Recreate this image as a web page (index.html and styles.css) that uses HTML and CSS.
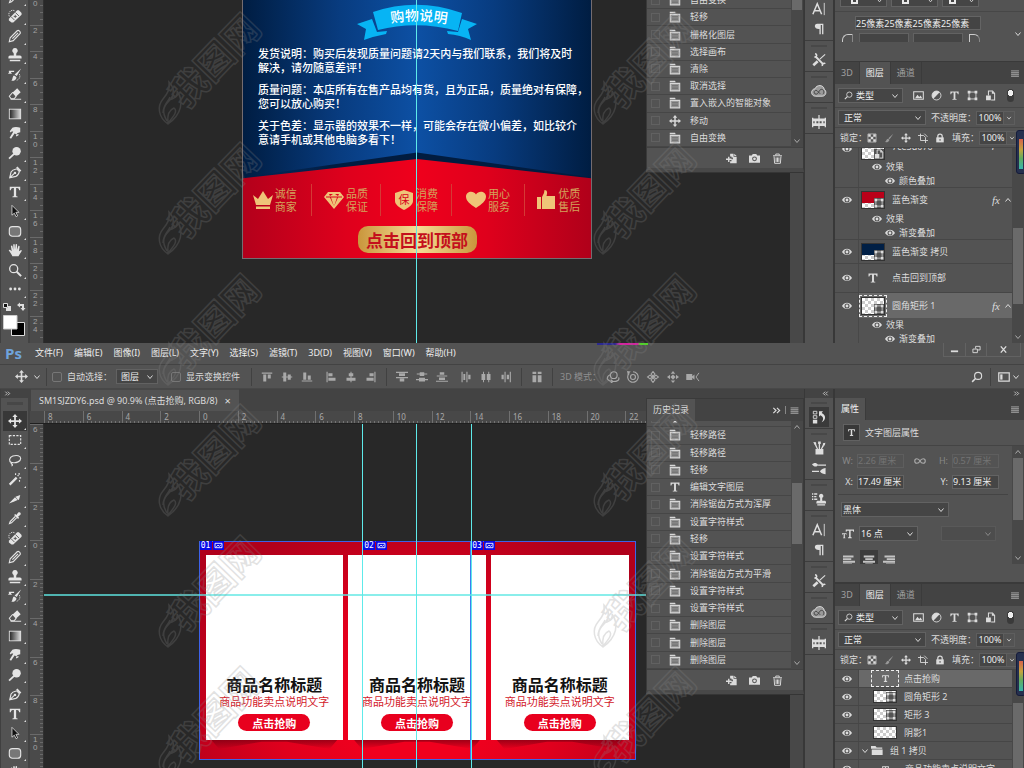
FILE: index.html
```html
<!DOCTYPE html>
<html lang="zh-CN">
<head>
<meta charset="utf-8">
<title>SM1SJZDY6.psd</title>
<link rel="stylesheet" href="styles.css">
</head>
<body>
<svg class="sprite" aria-hidden="true">
  <symbol id="i-move" viewBox="0 0 16 16"><path fill="currentColor" d="M8 0l3 3.500H9V7h3.500V5L16 8l-3.500 3V9H9v3.500h2L8 16l-3-3.500h2V9H3.500v2L0 8l3.500-3v2H7V3.500H5z"/></symbol>
  <symbol id="i-marquee" viewBox="0 0 16 16"><rect x="1.500" y="3" width="13" height="10" fill="none" stroke="currentColor" stroke-width="1.300" stroke-dasharray="2.500 1.500"/></symbol>
  <symbol id="i-lasso" viewBox="0 0 16 16"><path fill="none" stroke="currentColor" stroke-width="1.300" d="M4 11C.8 9.500 1 5 5.500 3.500s9-.5 9 2.800-5 5.400-9 4.700c-2-.4-2.500 1.500-1 1.800 1 .2.700 1.700-.5 2"/></symbol>
  <symbol id="i-wand" viewBox="0 0 16 16"><path fill="currentColor" d="M1 13.500l8-8 1.800 1.800-8 8zM8 1.500h1.300v2H8zM12 1h1.400v2H12zM13 6h2v1.300h-2zM10.500 4l1-1 1 1-1 1zM12.500 9h1.300v2h-1.300z"/></symbol>
  <symbol id="i-slice" viewBox="0 0 16 16"><path fill="currentColor" d="M1 13l7-7 3 3-4.500 2zM8.500 5.500L14 3.500l-1.500 5.500-1.500-.5z" /></symbol>
  <symbol id="i-dropper" viewBox="0 0 16 16"><path fill="none" stroke="currentColor" stroke-width="1.300" d="M8.500 6L2.500 12l-.8 2.300L4 13.500l6-6"/><path fill="currentColor" d="M7 4.500l1.200-1.200L9.500 4.500l2.200-2.700c1.800-1.300 3.800.7 2.500 2.500L11.500 6.500l1.200 1.300L11.500 9z"/></symbol>
  <symbol id="i-heal" viewBox="0 0 16 16"><path fill="currentColor" d="M1 11l9.500-9.500h2l3 3v2L6 15.500H4L1 13z"/><path stroke="#535353" stroke-width="1" d="M3.500 8.800l4 4M8.500 4l4 4M6.500 8.500h3.500M8.300 6.700v3.500"/><path fill="none" stroke="currentColor" stroke-dasharray="1.500 1" d="M1.500 8.500C-.5 4 3.500 0 7.500 2"/></symbol>
  <symbol id="i-pencil" viewBox="0 0 16 16"><path fill="none" stroke="currentColor" stroke-width="1.300" d="M1.500 14.500l1-4.500 8-8c1.500-1.500 4.500 1.500 3.200 3.200L6 13.300zM5 11l6.500-6.500"/></symbol>
  <symbol id="i-stamp" viewBox="0 0 16 16"><path fill="currentColor" d="M8 0a3 3 0 0 1 1.600 5.600L9.300 8.500H14l1.500 1.300V12H.5V9.800L2 8.500h4.700l-.3-2.900A3 3 0 0 1 8 0zM2 13.300h12V15H2z"/></symbol>
  <symbol id="i-hbrush" viewBox="0 0 16 16"><path fill="currentColor" d="M15 .5L10 9 7.500 7.500zM7 8.500l2.500 1.700c.5 3.300-3 5-5.700 4.300C5.500 13 5 9 7 8.500zM1 3h6v1.500H1zM0 6.500L2.500 3 4.500 6.500z"/><path fill="none" stroke="currentColor" stroke-dasharray="1.500 1" d="M13 7c1.500 3 0 6-3 7"/></symbol>
  <symbol id="i-eraser" viewBox="0 0 16 16"><path fill="currentColor" d="M5 6.500L10.500 1.500 14.500 6 9 11zM15 14.500H3v-1.200h12z"/><path fill="none" stroke="currentColor" stroke-width="1.200" d="M5.500 6L1.500 10.500l2 3H7l2.500-3"/></symbol>
  <linearGradient id="toolgrad"><stop offset="0" stop-color="#222"/><stop offset="1" stop-color="#ddd"/></linearGradient>
  <symbol id="i-grad" viewBox="0 0 16 16"><rect x="1.500" y="2.500" width="13" height="11" fill="url(#toolgrad)" stroke="currentColor"/></symbol>
  <symbol id="i-smudge" viewBox="0 0 16 16"><path fill="currentColor" d="M2 6l3-4c2-1 6-1 9 0v5L11 8l-1.500 1.500-2-1L3.500 14.500 1.800 13.500 6 6.500 4.500 6 3 7.500zM9 10l3-1v1.500L9.500 12z"/></symbol>
  <symbol id="i-dodge" viewBox="0 0 16 16"><circle cx="9.800" cy="6" r="4.800" fill="currentColor"/><path stroke="currentColor" stroke-width="2" d="M7 9l-5.800 5.500"/></symbol>
  <symbol id="i-pen" viewBox="0 0 16 16"><path fill="none" stroke="currentColor" stroke-width="1.300" d="M2 14.500L3.500 8C5 5.500 8 5 10 4.500l3 3c-.5 2-1.500 4.500-4 5.500zM2 14.500L8 9"/><circle cx="8" cy="9" r="1.400" fill="currentColor"/><path stroke="currentColor" stroke-width="2" d="M10 2.500l4.500 4.500"/></symbol>
  <symbol id="i-type" viewBox="0 0 16 16"><path fill="currentColor" d="M2 2h12v4h-1.200c-.3-1.700-1-2.500-2.300-2.500H9.300v8.700c0 .6.700.8 1.700.9V14H5v-.9c1-.1 1.700-.3 1.700-.9V3.500H5.500C4.200 3.500 3.500 4.300 3.200 6H2z"/></symbol>
  <symbol id="i-arrow" viewBox="0 0 16 16"><path fill="#111" stroke="currentColor" stroke-width=".9" d="M4.500 1.500l8 8H9l2 4-1.800 1-2-4-2.700 2.300z"/></symbol>
  <symbol id="i-rrect" viewBox="0 0 16 16"><rect x="1.500" y="3" width="13" height="11" rx="3.500" fill="#777" stroke="currentColor" stroke-width="1.300"/></symbol>
  <symbol id="i-hand" viewBox="0 0 16 16"><path fill="currentColor" d="M5 15C3.500 12 2 10 .8 8.500 1.500 7 3 8 4.200 9.500L3.300 3.500c.6-1 1.600-.7 1.800.2L6 8V1.800c.5-.9 1.500-.7 1.700.1L8 7.500l.8-6c.6-.8 1.500-.5 1.600.5L10.200 8l1.600-4.500c.7-.6 1.500-.2 1.500.8L12.500 9.500 15 8c.8.200.8.800.5 1.500L12 15z"/></symbol>
  <symbol id="i-zoom" viewBox="0 0 16 16"><circle cx="6.500" cy="6.500" r="4.600" fill="none" stroke="currentColor" stroke-width="1.500"/><path stroke="currentColor" stroke-width="2.200" d="M10 10l5 5"/></symbol>
  <symbol id="i-dots" viewBox="0 0 16 16"><g fill="currentColor"><circle cx="3" cy="8" r="1.600"/><circle cx="8" cy="8" r="1.600"/><circle cx="13" cy="8" r="1.600"/></g></symbol>
  <symbol id="i-chev" viewBox="0 0 8 8"><path fill="none" stroke="currentColor" d="M1.500 2.500L4 5.500l2.500-3"/></symbol>
  <symbol id="i-up" viewBox="0 0 8 8"><path fill="none" stroke="currentColor" d="M1.500 5.500L4 2.500l2.500 3"/></symbol>
  <symbol id="i-state" viewBox="0 0 16 16"><path fill="currentColor" d="M1 1h7l1 2H1z"/><path fill="#999" stroke="currentColor" stroke-width="1.400" d="M1.700 4.500h12.600v10H1.700z"/><path stroke="#666" d="M4 7.500h8M4 9.500h8M4 11.500h8"/></symbol>
  <symbol id="i-newdoc" viewBox="0 0 16 16"><path fill="currentColor" d="M6 1h5v4.500h4.500V15H6v-3h2V9h2V6.500H8V5H6zM12 1l3.500 3.500H12zM3 5.500h2V8h3v2H5v3H3v-3H0V8h3z"/></symbol>
  <symbol id="i-camera" viewBox="0 0 16 16"><path fill="currentColor" fill-rule="evenodd" d="M0 3.500h4L5.500 1.500h5L12 3.500h4V14H0zM8 5a3.500 3.500 0 1 0 0 7 3.500 3.500 0 0 0 0-7z"/><circle cx="8" cy="8.500" r="2" fill="currentColor"/></symbol>
  <symbol id="i-trash" viewBox="0 0 16 16"><path fill="none" stroke="currentColor" stroke-width="1.400" d="M1.500 4h13M5.500 3.500v-2h5v2M3 5l.8 10h8.400L13 5M6 6.500v6.500M8 6.500v6.500M10 6.500v6.500"/></symbol>
  <symbol id="i-char" viewBox="0 0 16 16"><path fill="none" stroke="currentColor" stroke-width="1.700" d="M1 14L6 2l5 12M3 10h6"/><path stroke="currentColor" d="M14 1v14"/></symbol>
  <symbol id="i-para" viewBox="0 0 16 16"><path fill="currentColor" d="M6 2h7v12h-1.500V3.500H10V14H8.500V8C2 8.500 2 2 6 2z"/></symbol>
  <symbol id="i-tools" viewBox="0 0 16 16"><path fill="none" stroke="currentColor" stroke-width="2.200" d="M4 4l9 9"/><path fill="none" stroke="currentColor" stroke-width="1.800" d="M3.500.8c2.500.5 2.500 4-.8 3.800M12 14.800c-1-2.500 2-4 3-2.300"/><path stroke="currentColor" stroke-width="1.300" d="M15 1.500L9 7"/><path stroke="currentColor" stroke-width="3" d="M6.500 9.500L1.500 14"/></symbol>
  <symbol id="i-cc" viewBox="0 0 20 16"><path fill="#9a9a9a" stroke="currentColor" stroke-width="1.200" d="M6 14.500C-1 14.500-.5 5.500 5 5.300 7-.5 16 0 16.500 6c3.500 2 2.500 8.500-2.500 8.500z"/><path fill="none" stroke="#444" stroke-width="1.200" d="M11.500 11.500L7.500 7.500c-4-1.500-5 4.500-1 4.500 3 0 3-5 6-6s5 4 2.200 6"/></symbol>
  <symbol id="i-align" viewBox="0 0 16 16"><path fill="currentColor" d="M0 3h1.500v11H0zM14.500 3H16v11h-1.500zM1 4h14v3H1zM1 9.500h14v3H1zM7.300 0h1.400v16H7.300zM3 6.500h2v4H3zM11 6.500h2v4h-2z"/></symbol>
  <symbol id="i-history" viewBox="0 0 16 16"><path fill="none" stroke="currentColor" d="M1.500 1.500h4v3h-4zM1.500 6.500h4v3h-4z"/><path fill="currentColor" d="M1 11h5v4.500H1zM8 1.500h4.500L11 3.500c6 3 4.500 8.500 0 10.500 2.500-3 2.500-6-1.300-8L8 7.500z"/></symbol>
  <symbol id="i-brushes" viewBox="0 0 16 16"><path fill="currentColor" d="M4 9h9v6.500H4zM7.700 3h1.500v6H7.700zM3 4l1.500-.7L7 9H5.500zM12.500 4L14 5l-2.500 4H10zM7 .5h3v3H7zM1.500 1l3 .5.500 2.500-2 .5zM12.500 2.500l2.800-.5-.8 3-2 .5z"/></symbol>
  <symbol id="i-presets" viewBox="0 0 16 16"><path fill="currentColor" d="M7 4h9v1.500H7zM0 11h8v1.500H0zM0 4c2-2 5-2.500 7 .7C5 7.500 2 6.500 0 4zM9 11.700c2-3 5-3.500 6.500-3.700v7c-2 0-5-.5-6.500-3.300z"/></symbol>
  <symbol id="i-clone" viewBox="0 0 16 16"><path fill="currentColor" d="M0 1.500h1.500V3H0zM2.500 1.500H6V3H2.500zM0 4.500h1.500V6H0zM2.500 4.500H5V6H2.500zM0 7.500h1.500V9H0zM2.500 7.500H6V9H2.500zM10.500 2a2.500 2.500 0 0 1 1.200 4.700V10H15l1 1v2H5v-2l1-1h3.300V6.700A2.500 2.500 0 0 1 10.500 2zM6 14h9v1.500H6z"/></symbol>
  <symbol id="i-eye" viewBox="0 0 16 12"><path fill="currentColor" fill-rule="evenodd" d="M0 6C4-.8 12-.8 16 6 12 12.500 4 12.500 0 6zm8-4a4 4 0 1 0 0 8 4 4 0 0 0 0-8z"/><circle cx="8" cy="6" r="2.300" fill="currentColor"/></symbol>
  <symbol id="i-image" viewBox="0 0 16 16"><path fill="none" stroke="currentColor" stroke-width="1.500" d="M1 2.500h14v11H1z"/><path fill="currentColor" d="M3 12l3.500-5L9 10l2-2 2.500 4z"/></symbol>
  <symbol id="i-adjust" viewBox="0 0 16 16"><circle cx="8" cy="8" r="6.500" fill="none" stroke="currentColor" stroke-width="1.300"/><path fill="currentColor" d="M12.600 3.400A6.500 6.500 0 0 0 3.400 12.600z"/></symbol>
  <symbol id="i-shape" viewBox="0 0 16 16"><path fill="none" stroke="currentColor" stroke-width="1.200" d="M3 3h10v10H3z"/><path fill="currentColor" d="M1 1h4v4H1zM11 1h4v4h-4zM1 11h4v4H1zM11 11h4v4h-4z"/></symbol>
  <symbol id="i-smart" viewBox="0 0 16 16"><path fill="none" stroke="currentColor" stroke-width="1.500" d="M5 8V1.500h6L14 5v9.500h-5"/><path fill="currentColor" d="M1.500 8h7v7h-7zM10 1v4.500h4.500z"/></symbol>
  <symbol id="i-checker" viewBox="0 0 16 16"><path fill="none" stroke="currentColor" d="M1.500 1.500h13v13h-13z"/><path fill="currentColor" d="M2 2h4v4H2zM10 2h4v4h-4zM6 6h4v4H6zM2 10h4v4H2zM10 10h4v4h-4z"/></symbol>
  <symbol id="i-brush" viewBox="0 0 16 16"><path fill="currentColor" d="M15 1L9 10 7 8.500zM6.500 9l2 1.600C9 13.500 5 15.500 1 14.500 4 13.500 3.500 9.500 6.500 9z"/></symbol>
  <symbol id="i-crop" viewBox="0 0 16 16"><path fill="none" stroke="currentColor" stroke-width="1.400" d="M4 1v11h12M0 4h9l3 3v9M10 1l5 5"/></symbol>
  <symbol id="i-lock" viewBox="0 0 16 16"><path fill="currentColor" d="M2 7h12v8H2z"/><path fill="none" stroke="currentColor" stroke-width="2" d="M4.500 8V5c0-4.500 7-4.500 7 0v3"/><path fill="#444" d="M7.300 9.500h1.500v3H7.300z"/></symbol>
  <symbol id="i-menu" viewBox="0 0 16 16"><path fill="#8f8f8f" d="M1 2h14v2.500H1zM1 5.500h14V8H1zM1 9h14v2.500H1zM1 12.500h14V14H1z"/></symbol>
  <symbol id="i-folder" viewBox="0 0 16 12"><path fill="currentColor" d="M0 0h6l1.500 2H15v1.500H0zM1 4.500h14.500V12H1z"/></symbol>
  <symbol id="i-link" viewBox="0 0 16 10"><path fill="none" stroke="currentColor" stroke-width="1.500" d="M8 5c-2-4-7-4-7 0s5 4 7 0 7-4 7 0-5 4-7 0z"/></symbol>
  <symbol id="i-left" viewBox="0 0 16 16"><path fill="currentColor" d="M2 1h1.500v14H2zM4.500 3H10v4H4.500zM4.500 9H14v4H4.500z"/></symbol>
  <symbol id="i-centre" viewBox="0 0 16 16"><path fill="currentColor" d="M7.300 1h1.400v14H7.300zM5 3h6v4H5zM2 9h12v4H2z"/></symbol>
  <symbol id="i-right" viewBox="0 0 16 16"><path fill="currentColor" d="M12.500 1H14v14h-1.500zM6 3h5.500v4H6zM2 9h9.500v4H2z"/></symbol>
  <symbol id="i-top" viewBox="0 0 16 16"><path fill="currentColor" d="M1 2h14v1.500H1zM3 4.500h4V14H3zM9 4.500h4V10H9z"/></symbol>
  <symbol id="i-middle" viewBox="0 0 16 16"><path fill="currentColor" d="M1 7.300h14v1.400H1zM3 2h4v12H3zM9 4.500h4v7H9z"/></symbol>
  <symbol id="i-bottom" viewBox="0 0 16 16"><path fill="currentColor" d="M1 12.500h14V14H1zM3 2h4v9.500H3zM9 6h4v5.500H9z"/></symbol>
  <symbol id="i-disth" viewBox="0 0 16 16"><path fill="currentColor" d="M0 1h16v1.500H0zM4 3h8v3.500H4zM0 8h16v1.500H0zM5 10h6v4H5z"/></symbol>
  <symbol id="i-distc" viewBox="0 0 16 16"><path fill="currentColor" d="M5 1.500h6v5H5zM4 9h8v5H4zM1 3.300h14v1.400H1zM0 10.800h16v1.400H0z"/></symbol>
  <symbol id="i-distb" viewBox="0 0 16 16"><path fill="currentColor" d="M5 1.500h6v3.500H5zM1 6h14v1.400H1zM4 8.500h8V12H4zM0 13h16v1.400H0z"/></symbol>
  <symbol id="i-distl" viewBox="0 0 16 16"><path fill="currentColor" d="M2 1h1.500v14H2zM4.500 4H7v8H4.500zM8.500 1H10v14H8.500zM11 5h3v6h-3z"/></symbol>
  <symbol id="i-distm" viewBox="0 0 16 16"><path fill="currentColor" d="M2 4h5v8H2zM9 4h5v8H9zM4 1h1.300v14H4zM11 1h1.300v14H11z"/></symbol>
  <symbol id="i-distr" viewBox="0 0 16 16"><path fill="currentColor" d="M2 5h3v6H2zM6 1h1.500v14H6zM9 5h3v6H9zM13 1h1.500v14H13z"/></symbol>
  <symbol id="i-auto" viewBox="0 0 16 16"><path fill="currentColor" d="M2 1h5v3H2zM9 1h5v3H9zM2 5.500h5V15H2zM9 5.500h5V15H9z"/></symbol>
  <symbol id="i-orbit" viewBox="0 0 18 16"><g fill="none" stroke="currentColor" stroke-width="1.500"><circle cx="10" cy="5.500" r="4.500"/><path d="M5 5C-1 8 1 13 7 14M9 14c6 0 9-2 7.500-5.500M6 11.500l3 2.500-3 2"/></g></symbol>
  <symbol id="i-roll" viewBox="0 0 16 16"><g fill="none" stroke="currentColor" stroke-width="1.500"><circle cx="8" cy="8" r="3.300"/><path d="M3 3a7 7 0 1 0 5-2"/></g><path fill="currentColor" d="M0 0l5 .5-4 4z"/></symbol>
  <symbol id="i-pan" viewBox="0 0 16 16"><g fill="none" stroke="currentColor" stroke-width="1.500"><path d="M8 .8L10.500 4 8 7 5.500 4zM8 9l2.500 3L8 15.200 5.500 12zM.8 8L4 5.500 7 8l-3 2.500zM9 8l3-2.500L15.200 8 12 10.500z"/></g></symbol>
  <symbol id="i-slide" viewBox="0 0 16 16"><path fill="currentColor" d="M8 4.500L11.500 8 8 11.500 4.500 8zM8 0l3 3.500H5zM8 16l3-3.500H5zM0 8l4-3v6zM16 8l-4-3v6z"/></symbol>
  <symbol id="i-video" viewBox="0 0 18 16"><path fill="currentColor" d="M0 4h8v3l3-2.500v7L8 9v3H0z"/><path fill="none" stroke="currentColor" stroke-width="1.300" d="M17 2.500L13 8l4 5.500"/></symbol>
  <symbol id="i-search" viewBox="0 0 16 16"><circle cx="9.500" cy="6.500" r="4.700" fill="none" stroke="currentColor" stroke-width="1.500"/><path stroke="currentColor" stroke-width="2" d="M6 10l-4.500 4.500"/></symbol>
  <symbol id="i-space" viewBox="0 0 16 16"><path fill="none" stroke="currentColor" stroke-width="1.600" d="M1 2.500h14v11H1z"/><path fill="currentColor" d="M3 4.500h3v7H3z"/></symbol>
  <symbol id="i-dblr" viewBox="0 0 10 8"><path fill="none" stroke="currentColor" stroke-width="1.300" d="M1.500 1L4.500 4l-3 3M5.500 1L8.500 4l-3 3"/></symbol>
  <symbol id="i-dbll" viewBox="0 0 10 8"><path fill="none" stroke="currentColor" stroke-width="1.300" d="M4.500 1L1.500 4l3 3M8.500 1L5.500 4l3 3"/></symbol>
  <symbol id="i-tl" viewBox="0 0 16 16"><path fill="currentColor" d="M0 2h14v2.500H0zM0 5.500h11V8H0zM0 9h16v2.500H0zM0 12.500h12V15H0z"/></symbol>
  <symbol id="i-tc" viewBox="0 0 16 16"><path fill="currentColor" d="M1 2h14v2.500H1zM3 5.500h10V8H3zM0 9h16v2.500H0zM3 12.500h10V15H3z"/></symbol>
  <symbol id="i-tr" viewBox="0 0 16 16"><path fill="currentColor" d="M2 2h14v2.500H2zM5 5.500h11V8H5zM0 9h16v2.500H0zM4 12.500h12V15H4z"/></symbol>
  <symbol id="i-size" viewBox="0 0 16 16"><path fill="currentColor" d="M5 2h11v3h-1l-.5-1.500h-3V12l1.500.5v1H8v-1l1.500-.5V3.500h-3L6 5H5zM0 7h6v2h-.7L5 8H3.800v4.500l.7.500v.5h-3V13l.7-.5V8H1L.7 9H0z"/></symbol>
  <symbol id="i-slicebadge" viewBox="0 0 10 8"><path fill="none" stroke="#fff" d="M1 1.500h8v5H1zM2.500 5.500l2-2 1.500 1.500 2-2"/></symbol>
  <symbol id="wm" viewBox="0 0 110 115" overflow="visible"><g fill="none" stroke="currentColor" stroke-width="1.500"><path d="M8 111C-2 104-3 93 3 86 8 80 10 76 9 69c5 5 6 10 3 17 5-2 6-5 5-8 7 10 5 23-9 33zM7 108C1 98 4 93 9 88c4-4 5-7 4-12M8 110c-1-8 1-13 6-15 4 3 0 8-6 15M3 100c0-8 5-11 7-16"/><text x="26" y="97" font-size="37" font-weight="700" transform="rotate(-46 26 97)">我图网</text></g></symbol>
</svg>

<main class="screen">
<section class="window window-top">
  <aside class="toolbox">
    <div class="tools tools-top">
      <button aria-label="吸管"><svg><use href="#i-dropper"/></svg></button>
      <button aria-label="修复"><svg><use href="#i-heal"/></svg></button>
      <button aria-label="铅笔"><svg><use href="#i-pencil"/></svg></button>
      <button aria-label="图章"><svg><use href="#i-stamp"/></svg></button>
      <button aria-label="历史画笔"><svg><use href="#i-hbrush"/></svg></button>
      <button aria-label="橡皮擦"><svg><use href="#i-eraser"/></svg></button>
      <button aria-label="渐变"><svg><use href="#i-grad"/></svg></button>
      <button aria-label="涂抹"><svg><use href="#i-smudge"/></svg></button>
      <button aria-label="减淡"><svg><use href="#i-dodge"/></svg></button>
      <button aria-label="钢笔"><svg><use href="#i-pen"/></svg></button>
      <button aria-label="文字"><svg><use href="#i-type"/></svg></button>
      <button aria-label="路径选择"><svg><use href="#i-arrow"/></svg></button>
      <button aria-label="圆角矩形"><svg><use href="#i-rrect"/></svg></button>
      <button aria-label="抓手"><svg><use href="#i-hand"/></svg></button>
      <button aria-label="缩放"><svg><use href="#i-zoom"/></svg></button>
      <button aria-label="更多"><svg><use href="#i-dots"/></svg></button>
    </div>
    <svg class="swatches" viewBox="0 0 28 36"><path fill="#111" stroke="#ddd" d="M3.500 3.500h4v4h-4z"/><path fill="#ddd" d="M8 6h3v5H6V8h2zM17 5l3-2.500V4h4v4h1.500L23 11l-2.500-3H22V6h-2v1.500z"/><path fill="#000" stroke="#ddd" d="M11.500 22.500h13v13h-13z"/><path fill="#fff" stroke="#ccc" d="M3.500 15.500h13.500v13.500H3.500z"/></svg>
  </aside>
  <div class="vruler vruler-top"><span>0</span><span>2</span><span>4</span><span>6</span><span>8</span><span>1<br>0</span><span>1<br>2</span><span>1<br>4</span><span>1<br>6</span><span>1<br>8</span><span>2<br>0</span><span>2<br>2</span><span>2<br>4</span></div>
  <div class="document">
    <div class="canvas">
      <article class="notice">
        <svg class="notice-back" viewBox="0 0 350 259" preserveAspectRatio="none" aria-hidden="true">
          <defs><linearGradient id="redfill"><stop offset="0" stop-color="#b3001b"/><stop offset=".3" stop-color="#df001c"/><stop offset=".5" stop-color="#ef001c"/><stop offset=".7" stop-color="#df001c"/><stop offset="1" stop-color="#b0001a"/></linearGradient>
          <linearGradient id="navy"><stop offset="0" stop-color="#01204a" stop-opacity="0"/><stop offset=".25" stop-color="#011c40"/><stop offset=".8" stop-color="#011c40"/><stop offset="1" stop-color="#011c40"/></linearGradient></defs>
          <path fill="url(#navy)" d="M0 178L175 153l175 25v4H0z"/><path fill="url(#redfill)" d="M0 179L175 159.500 350 179v80H0z"/>
        </svg>
        <svg class="ribbon" viewBox="0 0 120 40"><g fill="#07b4f4"><path d="M16 9Q60-6 105 10l-4 18Q60 17 21 27z"/><path d="M15 16l-15 5 9 5-2 11q11-4 22-6l1-3-10 1z"/><path d="M105 16l15 5-9 5 3 11q-11-5-23-6l-1-3 11 1z"/></g><path id="arc" fill="none" d="M20 23Q60 12 104 24"/><text font-size="14" font-weight="500" fill="#fff"><textPath href="#arc" startOffset="50%" text-anchor="middle">购物说明</textPath></text></svg>
        <div class="notice-copy">
          <p>发货说明：购买后发现质量问题请2天内与我们联系，我们将及时<br>解决，请勿随意差评！</p>
          <p>质量问题：本店所有在售产品均有货，且为正品，质量绝对有保障，<br>您可以放心购买！</p>
          <p>关于色差：显示器的效果不一样，可能会存在微小偏差，如比较介<br>意请手机或其他电脑多看下！</p>
        </div>
        <div class="features">
          <div><svg viewBox="0 0 20 20"><path d="M0 5l5 4 5-8 5 8 5-4-3 10H3zM3 16.500h14V19H3z"/></svg><span>诚信<br>商家</span></div>
          <div><svg viewBox="0 0 20 20"><path fill-rule="evenodd" d="M4 2h12l4 5-10 12L0 7zM2 7.500h4l4 9-3-9h6l-3 9 4-9h4v-1H2zM5 4h4L6 6zM11 4h4l-1 2z"/></svg><span>品质<br>保证</span></div>
          <div><svg viewBox="0 0 20 20"><path d="M10 0l9 3v8c0 4-5 7-9 9-4-2-9-5-9-9V3z"/><text x="10" y="14" font-size="11" text-anchor="middle" fill="#d8001c">保</text></svg><span>消费<br>保障</span></div>
          <div><svg viewBox="0 0 20 20"><path d="M10 18C4 14 0 11 0 6.500 0 1 7.500 0 10 4.500 12.500 0 20 1 20 6.500 20 11 16 14 10 18z"/></svg><span>用心<br>服务</span></div>
          <div><svg viewBox="0 0 20 20"><path d="M1 7h4v12H1zM6 7l2-4 .5-3c3 0 3 3 2 6H19v13H6z"/></svg><span>优质<br>售后</span></div>
        </div>
        <button class="back-top">点击回到顶部</button>
      </article>
      <i class="guide-v guide-mid"></i>
    </div>
    <div class="vscroll"></div>
    <section class="history history-top">
      <div class="history-body">
        <ol class="states states-top">
          <li><i></i><svg><use href="#i-state"/></svg>自由变换</li>
          <li><i></i><svg><use href="#i-state"/></svg>轻移</li>
          <li><i></i><svg><use href="#i-state"/></svg>栅格化图层</li>
          <li><i></i><svg><use href="#i-state"/></svg>选择画布</li>
          <li><i></i><svg><use href="#i-state"/></svg>清除</li>
          <li><i></i><svg><use href="#i-state"/></svg>取消选择</li>
          <li><i></i><svg><use href="#i-state"/></svg>置入嵌入的智能对象</li>
          <li><i></i><svg><use href="#i-move"/></svg>移动</li>
          <li><i></i><svg><use href="#i-state"/></svg>自由变换</li>
        </ol>
        <div class="scroll"><b class="thumb-first"></b><svg><use href="#i-chev"/></svg></div>
      </div>
      <footer><svg><use href="#i-newdoc"/></svg><svg><use href="#i-camera"/></svg><svg><use href="#i-trash"/></svg></footer>
    </section>
  </div>
  <nav class="strip strip-top">
    <div><svg><use href="#i-char"/></svg><svg><use href="#i-para"/></svg></div>
    <div><svg><use href="#i-tools"/></svg></div>
    <div><svg><use href="#i-cc"/></svg></div>
    <div><svg><use href="#i-align"/></svg></div>
  </nav>
  <aside class="panels">
    <section class="corner-props">
      <div class="stroke-row"><i><b></b><svg><use href="#i-chev"/></svg></i><i><b></b><svg><use href="#i-chev"/></svg></i><i><b></b><svg><use href="#i-chev"/></svg></i></div>
      <div class="corner-text"><input aria-label="圆角" value="25像素25像素25像素25像素"></div>
      <div class="corner-row"><u></u><i></i><i></i><u class="flip"></u></div>
      <svg class="corner-chev"><use href="#i-chev"/></svg>
    </section>
    <section class="layers">
      <div class="tabs"><button>3D</button><button class="on">图层</button><button>通道</button><svg><use href="#i-menu"/></svg></div>
      <div class="filter">
        <label class="pick pick-type"><svg class="lead"><use href="#i-search"/></svg><select aria-label="类型"><option>类型</option></select><svg class="chev"><use href="#i-chev"/></svg></label>
        <svg><use href="#i-image"/></svg><svg><use href="#i-adjust"/></svg><svg><use href="#i-type"/></svg><svg><use href="#i-shape"/></svg><svg><use href="#i-smart"/></svg><b class="toggle"></b>
      </div>
      <div class="blend">
        <label class="pick pick-mode"><select aria-label="模式"><option>正常</option></select><svg class="chev"><use href="#i-chev"/></svg></label>
        <label class="num"><span>不透明度：</span><input value="100%"><svg><use href="#i-chev"/></svg></label>
      </div>
      <div class="blend locks">
        <span>锁定：</span><svg><use href="#i-checker"/></svg><svg class="dim"><use href="#i-brush"/></svg><svg><use href="#i-move"/></svg><svg><use href="#i-crop"/></svg><svg><use href="#i-lock"/></svg>
        <label class="num"><span>填充：</span><input value="100%"><svg><use href="#i-chev"/></svg></label>
      </div>
      <div class="layer-body">
        <ul class="list list-top">
          <li class="cut"><span class="eye"><svg><use href="#i-eye"/></svg></span><span class="thumb"><svg><use href="#i-smart"/></svg></span><span>7ce3d070</span><em>fx</em></li>
          <li class="sub"><span class="eye"></span><svg><use href="#i-eye"/></svg>效果</li>
          <li class="sub deep last"><span class="eye"></span><svg><use href="#i-eye"/></svg>颜色叠加</li>
          <li><span class="eye"><svg><use href="#i-eye"/></svg></span><span class="thumb red"><svg><use href="#i-shape"/></svg></span><span>蓝色渐变</span><em>fx</em><svg class="fold"><use href="#i-up"/></svg></li>
          <li class="sub"><span class="eye"></span><svg><use href="#i-eye"/></svg>效果</li>
          <li class="sub deep last"><span class="eye"></span><svg><use href="#i-eye"/></svg>渐变叠加</li>
          <li class="last"><span class="eye"><svg><use href="#i-eye"/></svg></span><span class="thumb blue"><svg><use href="#i-shape"/></svg></span><span>蓝色渐变 拷贝</span></li>
          <li class="tall last"><span class="eye"><svg><use href="#i-eye"/></svg></span><svg class="tlayer"><use href="#i-type"/></svg><span>点击回到顶部</span></li>
          <li class="sel"><span class="eye"><svg><use href="#i-eye"/></svg></span><span class="thumb picked"><svg><use href="#i-shape"/></svg></span><span>圆角矩形 1</span><em>fx</em><svg class="fold"><use href="#i-up"/></svg></li>
          <li class="sub"><span class="eye"></span><svg><use href="#i-eye"/></svg>效果</li>
          <li class="sub deep"><span class="eye"></span><svg><use href="#i-eye"/></svg>渐变叠加</li>
        </ul>
        <div class="scroll"><b class="thumb-layers"></b><svg><use href="#i-chev"/></svg></div>
      </div>
      <i class="meter"></i>
    </section>
  </aside>
</section>

<section class="window window-bottom">
  <header class="menubar">
    <strong>Ps</strong>
    <nav><a href="#">文件(F)</a><a href="#">编辑(E)</a><a href="#">图像(I)</a><a href="#">图层(L)</a><a href="#">文字(Y)</a><a href="#">选择(S)</a><a href="#">滤镜(T)</a><a href="#">3D(D)</a><a href="#">视图(V)</a><a href="#">窗口(W)</a><a href="#">帮助(H)</a></nav>
    <i class="spark"></i>
    <div class="winbtns"><button aria-label="最小化"><svg viewBox="0 0 10 10"><path fill="currentColor" d="M1 6h8v2H1z"/></svg></button><button aria-label="还原"><svg viewBox="0 0 10 10"><path fill="none" stroke="currentColor" d="M1 4.500h5v4H1zM4 4V1.500h5v4H6"/></svg></button><button aria-label="关闭"><svg viewBox="0 0 10 10"><path stroke="currentColor" stroke-width="1.500" d="M2 1.500l6 7M8 1.500l-6 7"/></svg></button></div>
  </header>
  <div class="options">
    <svg class="lead"><use href="#i-move"/></svg><svg class="small"><use href="#i-chev"/></svg><hr>
    <label class="tick"><input type="checkbox"><span>自动选择：</span></label>
    <label class="pick pick-layer"><select aria-label="对象"><option>图层</option></select><svg class="chev"><use href="#i-chev"/></svg></label>
    <label class="tick second"><input type="checkbox"><span>显示变换控件</span></label><hr>
    <div class="set"><svg><use href="#i-top"/></svg><svg><use href="#i-middle"/></svg><svg><use href="#i-bottom"/></svg></div>
    <div class="set"><svg><use href="#i-left"/></svg><svg><use href="#i-centre"/></svg><svg><use href="#i-right"/></svg></div><hr>
    <div class="set"><svg><use href="#i-disth"/></svg><svg><use href="#i-distc"/></svg><svg><use href="#i-distb"/></svg></div>
    <div class="set"><svg><use href="#i-distl"/></svg><svg><use href="#i-distm"/></svg><svg><use href="#i-distr"/></svg></div><hr>
    <div class="set"><svg><use href="#i-auto"/></svg></div><hr>
    <span class="mode">3D 模式：</span>
    <div class="set"><svg><use href="#i-orbit"/></svg><svg><use href="#i-roll"/></svg><svg><use href="#i-pan"/></svg><svg><use href="#i-slide"/></svg><svg><use href="#i-video"/></svg></div>
    <div class="options-end"><svg><use href="#i-search"/></svg><hr><svg><use href="#i-space"/></svg><svg class="small"><use href="#i-chev"/></svg></div>
  </div>
  <div class="work">
    <aside class="toolbox">
      <div class="expand"><svg><use href="#i-dblr"/></svg></div>
      <div class="grip"></div>
      <div class="tools tools-bottom">
        <button class="on" aria-label="移动"><svg><use href="#i-move"/></svg></button>
        <button aria-label="选框"><svg><use href="#i-marquee"/></svg></button>
        <button aria-label="套索"><svg><use href="#i-lasso"/></svg></button>
        <button aria-label="魔棒"><svg><use href="#i-wand"/></svg></button>
        <button aria-label="切片"><svg><use href="#i-slice"/></svg></button>
        <button aria-label="吸管"><svg><use href="#i-dropper"/></svg></button>
        <button aria-label="修复"><svg><use href="#i-heal"/></svg></button>
        <button aria-label="铅笔"><svg><use href="#i-pencil"/></svg></button>
        <button aria-label="图章"><svg><use href="#i-stamp"/></svg></button>
        <button aria-label="历史画笔"><svg><use href="#i-hbrush"/></svg></button>
        <button aria-label="橡皮擦"><svg><use href="#i-eraser"/></svg></button>
        <button aria-label="渐变"><svg><use href="#i-grad"/></svg></button>
        <button aria-label="涂抹"><svg><use href="#i-smudge"/></svg></button>
        <button aria-label="减淡"><svg><use href="#i-dodge"/></svg></button>
        <button aria-label="钢笔"><svg><use href="#i-pen"/></svg></button>
        <button aria-label="文字"><svg><use href="#i-type"/></svg></button>
        <button aria-label="路径选择"><svg><use href="#i-arrow"/></svg></button>
        <button aria-label="圆角矩形"><svg><use href="#i-rrect"/></svg></button>
        <button aria-label="抓手"><svg><use href="#i-hand"/></svg></button>
      </div>
    </aside>
    <div class="docarea">
      <div class="doctabs"><button>SM1SJZDY6.psd @ 90.9% (点击抢购, RGB/8)<span>×</span></button></div>
      <div class="hruler"><div><span>8</span><span>6</span><span>4</span><span>2</span><span>0</span><span>2</span><span>4</span><span>6</span><span>8</span><span>10</span><span>12</span><span>14</span><span>16</span><span>18</span><span>20</span><span>22</span></div></div>
      <div class="docrow">
        <div class="vruler vruler-bottom"><span>6</span><span>4</span><span>2</span><span>0</span><span>2</span><span>4</span><span>6</span><span>8</span><span>1<br>0</span></div>
        <div class="canvas">
          <article class="promo">
            <section><h2>商品名称标题</h2><p>商品功能卖点说明文字</p><button>点击抢购</button></section>
            <section><h2>商品名称标题</h2><p>商品功能卖点说明文字</p><button>点击抢购</button></section>
            <section><h2>商品名称标题</h2><p>商品功能卖点说明文字</p><button>点击抢购</button></section>
            <div class="slice slice-1"><b>01</b><svg><use href="#i-slicebadge"/></svg></div>
            <div class="slice slice-2"><b>02</b><svg><use href="#i-slicebadge"/></svg></div>
            <div class="slice slice-3"><b>03</b><svg><use href="#i-slicebadge"/></svg></div>
          </article>
          <i class="guide-v guide-left"></i><i class="guide-v guide-mid"></i><i class="guide-v guide-right"></i><i class="guide-h"></i>
        </div>
        <div class="vscroll"></div>
      </div>
      <section class="history history-bottom">
        <header><b>历史记录</b><svg><use href="#i-dblr"/></svg><hr><svg><use href="#i-menu"/></svg></header>
        <div class="history-body">
          <ol class="states states-bottom">
            <li><i></i><svg><use href="#i-type"/></svg></li>
            <li><i></i><svg><use href="#i-state"/></svg>轻移路径</li>
            <li><i></i><svg><use href="#i-state"/></svg>轻移路径</li>
            <li><i></i><svg><use href="#i-state"/></svg>轻移</li>
            <li><i></i><svg><use href="#i-type"/></svg>编辑文字图层</li>
            <li><i></i><svg><use href="#i-state"/></svg>消除锯齿方式为浑厚</li>
            <li><i></i><svg><use href="#i-state"/></svg>设置字符样式</li>
            <li><i></i><svg><use href="#i-state"/></svg>轻移</li>
            <li><i></i><svg><use href="#i-state"/></svg>设置字符样式</li>
            <li><i></i><svg><use href="#i-state"/></svg>消除锯齿方式为平滑</li>
            <li><i></i><svg><use href="#i-state"/></svg>设置字符样式</li>
            <li><i></i><svg><use href="#i-state"/></svg>设置字符样式</li>
            <li><i></i><svg><use href="#i-state"/></svg>删除图层</li>
            <li><i></i><svg><use href="#i-state"/></svg>删除图层</li>
            <li><i></i><svg><use href="#i-state"/></svg>删除图层</li>
          </ol>
          <div class="scroll"><svg><use href="#i-up"/></svg><b class="thumb-states"></b><svg><use href="#i-chev"/></svg></div>
        </div>
        <footer><svg><use href="#i-newdoc"/></svg><svg><use href="#i-camera"/></svg><svg><use href="#i-trash"/></svg></footer>
      </section>
    </div>
    <nav class="strip">
      <header><svg><use href="#i-dbll"/></svg></header>
      <div><svg class="on"><use href="#i-history"/></svg></div>
      <div><svg><use href="#i-brushes"/></svg><svg><use href="#i-presets"/></svg></div>
      <div><svg><use href="#i-clone"/></svg></div>
      <div><svg><use href="#i-char"/></svg><svg><use href="#i-para"/></svg></div>
      <div><svg><use href="#i-tools"/></svg></div>
      <div><svg><use href="#i-cc"/></svg></div>
      <div><svg><use href="#i-align"/></svg></div>
    </nav>
    <aside class="panels">
      <header class="collapse"><svg><use href="#i-dblr"/></svg></header>
      <section class="props">
        <div class="tabs"><button class="on">属性</button><svg><use href="#i-menu"/></svg></div>
        <h3><svg><use href="#i-type"/></svg>文字图层属性</h3>
        <div class="props-body">
          <div class="fields">
            <div class="pair off"><label>W:<input value="2.26 厘米" disabled></label><svg><use href="#i-link"/></svg><label>H:<input value="0.57 厘米" disabled></label></div>
            <div class="pair"><label>X:<input value="17.49 厘米"></label><svg></svg><label>Y:<input value="9.13 厘米"></label></div>
            <hr>
            <label class="pick pick-font"><select aria-label="字体"><option>黑体</option></select><svg class="chev"><use href="#i-chev"/></svg></label>
            <div class="sizes"><svg><use href="#i-size"/></svg><label class="pick pick-size"><select aria-label="字号"><option>16 点</option></select><svg class="chev"><use href="#i-chev"/></svg></label><label class="pick pick-style"><select aria-label="样式" disabled><option></option></select><svg class="chev"><use href="#i-chev"/></svg></label></div>
            <div class="aligns"><button aria-label="左对齐"><svg><use href="#i-tl"/></svg></button><button class="on" aria-label="居中"><svg><use href="#i-tc"/></svg></button><button aria-label="右对齐"><svg><use href="#i-tr"/></svg></button></div>
          </div>
          <div class="scroll"><svg><use href="#i-up"/></svg><b class="thumb-props"></b><svg><use href="#i-chev"/></svg></div>
        </div>
      </section>
      <section class="layers">
        <div class="tabs"><button>3D</button><button class="on">图层</button><button>通道</button><svg><use href="#i-menu"/></svg></div>
        <div class="filter">
          <label class="pick pick-type"><svg class="lead"><use href="#i-search"/></svg><select aria-label="类型"><option>类型</option></select><svg class="chev"><use href="#i-chev"/></svg></label>
          <svg><use href="#i-image"/></svg><svg><use href="#i-adjust"/></svg><svg><use href="#i-type"/></svg><svg><use href="#i-shape"/></svg><svg><use href="#i-smart"/></svg><b class="toggle"></b>
        </div>
        <div class="blend">
          <label class="pick pick-mode"><select aria-label="模式"><option>正常</option></select><svg class="chev"><use href="#i-chev"/></svg></label>
          <label class="num"><span>不透明度：</span><input value="100%"><svg><use href="#i-chev"/></svg></label>
        </div>
        <div class="blend locks">
          <span>锁定：</span><svg><use href="#i-checker"/></svg><svg class="dim"><use href="#i-brush"/></svg><svg><use href="#i-move"/></svg><svg><use href="#i-crop"/></svg><svg><use href="#i-lock"/></svg>
          <label class="num"><span>填充：</span><input value="100%"><svg><use href="#i-chev"/></svg></label>
        </div>
        <div class="layer-body">
          <ul class="list list-bottom">
            <li class="sel last"><span class="eye"><svg><use href="#i-eye"/></svg></span><span class="thumb picked clear"><svg><use href="#i-type"/></svg></span><span>点击抢购</span></li>
            <li class="last"><span class="eye"><svg><use href="#i-eye"/></svg></span><span class="thumb"><svg><use href="#i-shape"/></svg></span><span>圆角矩形 2</span></li>
            <li class="last"><span class="eye"><svg><use href="#i-eye"/></svg></span><span class="thumb"><svg><use href="#i-shape"/></svg></span><span>矩形 3</span></li>
            <li class="last"><span class="eye"><svg><use href="#i-eye"/></svg></span><span class="thumb"></span><span>阴影1</span></li>
            <li class="last group"><span class="eye"><svg><use href="#i-eye"/></svg></span><svg class="small"><use href="#i-chev"/></svg><svg class="folder"><use href="#i-folder"/></svg><span>组 1 拷贝</span></li>
            <li><span class="eye"><svg><use href="#i-eye"/></svg></span><svg class="tlayer"><use href="#i-type"/></svg><span>商品功能卖点说明文字</span></li>
          </ul>
          <div class="scroll"><b class="thumb-low"></b></div>
        </div>
        <i class="meter"></i>
      </section>
    </aside>
  </div>
</section>
<svg class="marks" aria-hidden="true">
  <g><use href="#wm" x="160" y="13" width="110" height="115"/><use href="#wm" x="160" y="143" width="110" height="115"/><use href="#wm" x="160" y="274" width="110" height="115"/><use href="#wm" x="160" y="405" width="110" height="115"/><use href="#wm" x="160" y="536" width="110" height="115"/><use href="#wm" x="160" y="667" width="110" height="115"/>
  <use href="#wm" x="595" y="13" width="110" height="115"/><use href="#wm" x="595" y="143" width="110" height="115"/><use href="#wm" x="595" y="274" width="110" height="115"/><use href="#wm" x="595" y="405" width="110" height="115"/><use href="#wm" x="595" y="536" width="110" height="115"/><use href="#wm" x="595" y="667" width="110" height="115"/></g>
</svg>
</main>
</body>
</html>
```
FILE: styles.css
```css
* { box-sizing: border-box; }
body { margin: 0; background: #282828; color: #dcdcdc; font: 9px/12px "Noto Sans", "Noto Sans CJK SC", sans-serif; overflow: hidden; }
button, input, select { font: inherit; color: inherit; background: none; border: 0; padding: 0; margin: 0; border-radius: 0; min-width: 0; }
ul, ol { list-style: none; margin: 0; padding: 0; }
hr { border: 0; margin: 0; }
a { color: inherit; text-decoration: none; }
svg { display: block; flex: none; width: 12px; height: 12px; }
.sprite { position: absolute; width: 0; height: 0; }
.screen { position: relative; display: grid; grid-template-rows: 343px 1fr; height: 100vh; min-width: 900px; overflow: hidden; }
.window { display: flex; overflow: hidden; min-height: 0; position: relative; }
.window-bottom { flex-direction: column; background: #535353; }
.work { flex: 1; display: flex; min-height: 0; }

/* Toolbox */
.toolbox { flex: none; width: 30px; background: #535353; border-left: 1px solid #404040; border-right: 2px solid #434343; overflow: hidden; }
.tools { display: grid; grid-auto-rows: 1fr; justify-items: center; }
.tools-top { height: 312px; margin-top: -13px; }
.tools-bottom { height: 371px; }
.tools button { position: relative; display: grid; place-items: center; width: 24px; color: #e4e4e4; }
.tools button::after { content: ""; position: absolute; right: 1px; bottom: 1px; border: 1px solid #ddd; border-top-color: transparent; border-left-color: transparent; }
.tools svg { width: 14px; height: 14px; }
.tools .on { background: #383838; }
.swatches { width: 28px; height: 36px; margin-top: 1px; margin-left: -1px; }
.expand { height: 9px; background: #434343; display: flex; align-items: center; padding-left: 3px; }
.expand svg { width: 7px; height: 5px; }
.grip { height: 13px; padding-top: 4px; }
.grip::before { content: ""; display: block; width: 16px; height: 3px; margin: 0 auto; background: #474747; }

/* Rulers */
.vruler { flex: none; width: 14px; background: #4a4a4a; border-right: 1px solid #303030; color: #a2a2a2; font: 8px/8px "Liberation Sans", sans-serif; display: flex; flex-direction: column; overflow: hidden; }
.vruler span { flex: 1; min-height: 0; border-top: 1px solid #6a6a6a; padding: 1px 0 0 3px; background: repeating-linear-gradient(#0000 0 3px, #696969 3px 4px) right / 3px 100% no-repeat; }
.vruler-top { height: 345px; margin-top: -2px; }
.vruler-top span { background: linear-gradient(#0000 6px, #696969 6px 7px, #0000 7px) right top / 3px 7px repeat-y; }
.vruler-bottom { height: 349px; }
.hruler { height: 13px; flex: none; background: #484848; border-bottom: 1px solid #1f1f1f; padding-left: 14px; overflow: hidden; color: #a8a8a8; font-size: 8px; line-height: 12px; }
.hruler div { display: flex; width: 620px; }
.hruler span { flex: 1; height: 13px; border-left: 1px solid #707070; padding-left: 3px; background: repeating-linear-gradient(90deg, #0000 0 3px, #737373 3px 4px) bottom / 100% 3px no-repeat; }

/* Document */
.document { flex: 1; display: flex; position: relative; min-width: 0; }
.docarea { flex: 1; display: flex; flex-direction: column; position: relative; min-width: 0; background: #434343; }
.doctabs { height: 22px; flex: none; display: flex; padding-left: 1px; }
.doctabs button { background: #535353; padding: 0 8px 0 8px; border-top: 1px solid #484848; display: flex; align-items: center; gap: 7px; }
.doctabs span { font-size: 11px; }
.docrow { flex: 1; display: flex; min-height: 0; }
.canvas { flex: 1; position: relative; background: #282828; overflow: hidden; }
.vscroll { flex: none; width: 14px; background: #484848; border-right: 1px solid #383838; }
.guide-v { position: absolute; top: 0; bottom: 0; width: 1px; background: #5eeaea; }
.guide-mid { left: calc(50% - 1px); }
.guide-left { left: calc(50% - 55px); }
.guide-right { left: calc(50% + 54px); }
.guide-h { position: absolute; left: 0; right: 0; top: 170px; height: 2px; background: #5fe8e4bb; }

/* Notice artwork */
.notice { position: relative; width: 350px; height: 259px; margin: 0 auto; padding-top: 3px; display: flex; flex-direction: column; align-items: center; border: 1px solid #746c70; border-top: 0; background: linear-gradient(90deg, #001d42, #083c80 28%, #0d50a4 50%, #083c80 72%, #001d42); color: #fff; }
.notice-back { position: absolute; left: 0; top: 0; width: 100%; height: 100%; }
.ribbon { width: 120px; height: 40px; position: relative; }
.notice-copy { align-self: stretch; padding: 3px 0 0 15px; font-size: 11px; line-height: 14px; font-weight: 500; white-space: nowrap; position: relative; font-family: "Noto Sans CJK SC", sans-serif; }
.notice-copy p { margin: 0 0 8px; }
.features { position: relative; align-self: stretch; display: grid; grid-template-columns: 68fr 70fr 71fr 74fr 67fr; margin-top: 30px; height: 32px; color: #d3a35c; font: 11px/13px "Noto Sans CJK SC", sans-serif; }
.features div { display: flex; align-items: center; justify-content: center; gap: 2px; border-left: 1px solid #d53a35; }
.features div:first-child { border-left: 0; padding-right: 4px; }
.features svg { width: 20px; height: 20px; fill: #efc478; }
.back-top { position: relative; margin-top: 10px; width: 119px; height: 27px; border-radius: 10px; background: linear-gradient(90deg, #c9963c, #f6dc96 50%, #c9963c); color: #c4101c; font: 700 17px/26px "Noto Sans CJK SC", sans-serif; }

/* Promo artwork */
.promo { position: relative; width: 437px; height: 219px; margin: 117px auto 0; padding: 13px 6px 19px; border: 1px solid #3d62e8; background: radial-gradient(ellipse at 50% 80%, #f0001e 20%, #e0001d 45%, #b0001b 85%); display: grid; grid-template-columns: repeat(3, 1fr); gap: 5px; }
.promo section { position: relative; background: #fff; color: #111; display: flex; flex-direction: column; align-items: center; justify-content: flex-end; padding-bottom: 9px; white-space: nowrap; font-family: "Noto Sans CJK SC", sans-serif; }
.promo section::after { content: ""; position: absolute; left: 6px; right: 6px; top: 100%; height: 9px; background: linear-gradient(#6a001199, #6a001100); clip-path: polygon(0 0, 100% 0, 94% 100%, 60% 20%, 40% 20%, 6% 100%); }
.promo h2 { margin: 0; font-size: 16px; line-height: 19px; font-weight: 700; }
.promo p { margin: 0; font-size: 11px; line-height: 14px; color: #d3202a; }
.promo button { margin-top: 6px; width: 72px; height: 17px; border-radius: 9px; background: #e8001e; color: #fff; font: 700 11px/16px "Noto Sans CJK SC", sans-serif; }
.slice { position: absolute; top: -1px; display: flex; align-items: flex-start; gap: 1px; font: 8px/9px "DejaVu Sans Mono", monospace; color: #fff; }
.slice b { background: #0a0ae6; font-weight: 400; width: 12px; text-align: center; }
.slice svg { width: 11px; height: 9px; padding: 1px; background: #0a0ae6; }
.slice-1 { left: 0; }
.slice-2, .slice-3 { bottom: -1px; border-left: 1px solid #3d7df0; }
.slice-2 { left: calc(50% - 55px); }
.slice-3 { left: calc(50% + 53px); }

/* History panel */
.history { position: absolute; right: 0; width: 158px; background: #535353; border: 1px solid #3a3a3a; border-bottom: 4px solid #484848; box-shadow: 0 1px 0 #353535; }
.history-top { top: -3px; }
.history-bottom { top: 9px; }
.history header { height: 22px; background: #434343; display: flex; align-items: center; gap: 4px; padding-right: 4px; }
.history header b { font-weight: 400; height: 22px; line-height: 22px; padding: 0 6px; background: #535353; margin-right: auto; }
.history header svg { width: 9px; height: 9px; }
.history header hr { width: 1px; height: 8px; background: #888; }
.history-body { display: flex; overflow: hidden; border-bottom: 1px solid #424242; }
.states { flex: 1; display: grid; grid-auto-rows: 1fr; }
.states-top { height: 155px; margin-top: -6px; }
.states-bottom { height: 259px; margin-top: -11px; }
.states li { display: flex; align-items: center; border-bottom: 1px solid #464646; white-space: nowrap; }
.states i { width: 9px; height: 9px; border: 1px solid #616161; margin: 0 9px 0 4px; }
.states svg { margin-right: 9px; color: #d8d8d8; }
.history footer { height: 20px; display: flex; align-items: center; justify-content: flex-end; gap: 12px; padding-right: 20px; }
.history footer svg { width: 11px; height: 11px; }
.scroll { flex: none; width: 12px; background: #484848; display: flex; flex-direction: column; align-items: center; color: #aaa; }
.scroll svg { width: 8px; height: 8px; margin: 2px 0; }
.scroll svg:last-child { margin-top: auto; }
.scroll b { width: 10px; background: #6a6a6a; }
.thumb-first { height: 12px; }
.thumb-states { height: 61px; margin-top: 50px; }
.thumb-layers { height: 76px; margin-top: 80px; }
.thumb-low { height: 80px; margin-top: 33px; }
.thumb-props { height: 62px; }

/* Icon strip */
.strip { flex: none; width: 31px; background: #535353; border-left: 1px solid #383838; border-right: 2px solid #383838; overflow: hidden; color: #dedede; }
.strip-top > div:first-child { margin-top: -10px; }
.strip header, .collapse { height: 9px; background: #434343; display: flex; align-items: center; justify-content: flex-end; padding-right: 4px; }
.strip header svg, .collapse svg { width: 7px; height: 5px; }
.strip div { position: relative; padding-top: 9px; border-bottom: 1px solid #3d3d3d; display: flex; flex-direction: column; align-items: center; padding-bottom: 1px; }
.strip div::before { content: ""; position: absolute; top: 4px; left: 6px; right: 6px; height: 2px; background: #484848; }
.strip div svg { width: 20px; height: 20px; padding: 3px 2px; }
.strip .on { background: #3a3a3a; }

/* Right panels */
.panels { flex: none; width: 189px; background: #535353; display: flex; flex-direction: column; min-height: 0; }
.tabs { display: flex; height: 22px; background: #434343; align-items: stretch; padding-right: 4px; flex: none; }
.tabs button { padding: 0 6px; color: #a0a0a0; border-right: 1px solid #3b3b3b; }
.tabs .on { background: #535353; color: #eee; }
.tabs svg { margin: auto 0 auto auto; width: 10px; height: 9px; }
.corner-props { position: relative; height: 62px; flex: none; border-bottom: 1px solid #3a3a3a; }
.stroke-row { height: 12px; border-bottom: 1px solid #474747; display: flex; gap: 4px; padding-left: 5px; overflow: hidden; }
.stroke-row i { width: 47px; height: 7px; background: #454545; border: 1px solid #636363; border-top: 0; display: flex; justify-content: space-between; padding: 0 3px 0 10px; }
.stroke-row i:last-child { width: 37px; padding-left: 6px; }
.stroke-row b { width: 7px; height: 4px; border: 2px solid #e8e8e8; border-top: 0; }
.stroke-row svg { width: 7px; height: 7px; margin-top: -3px; }
.corner-text { padding: 4px 0 0 20px; }
.corner-text input { display: block; width: 126px; height: 14px; background: #444; border: 1px solid #646464; color: #eee; font-size: 9px; }
.corner-row { display: flex; gap: 4px; padding: 3px 0 0 7px; height: 12px; }
.corner-row i { width: 50px; background: #444; border: 1px solid #626262; border-bottom: 0; }
.corner-row u { width: 11px; margin: 1px 2px 0 0; border: 1px solid #ccc; border-bottom: 0; border-right-color: #888; border-top-left-radius: 6px; }
.corner-row .flip { margin-left: 2px; border-radius: 0 6px 0 0; }
.corner-chev { position: absolute; right: 2px; top: 30px; width: 8px; height: 8px; }
.layers { position: relative; flex: 1; display: flex; flex-direction: column; min-height: 0; }
.filter { display: flex; align-items: center; gap: 7px; height: 24px; border-bottom: 1px solid #464646; padding-left: 3px; flex: none; }
.filter > svg { width: 11px; height: 11px; }
.filter .pick { margin-right: 3px; }
.toggle { width: 7px; height: 13px; border-radius: 4px; background: radial-gradient(circle at 50% 4px, #eee 3px, #3a3a3a 3px); margin-left: 4px; }
.pick { display: flex; align-items: center; height: 15px; background: #454545; border: 1px solid #626262; flex: none; }
.pick select { appearance: none; flex: 1; height: 13px; padding: 0 12px 0 3px; font-size: 9px; color: #eee; opacity: 1; }
.pick .chev { width: 8px; height: 8px; margin: 0 3px 0 -11px; pointer-events: none; }
.pick .lead { width: 9px; height: 9px; margin-left: 5px; }
.pick-type { width: 65px; }
.pick-mode { width: 88px; }
.pick-mode select { padding-left: 5px; }
.blend { display: flex; align-items: center; height: 20px; padding: 0 9px 0 3px; border-bottom: 1px solid #464646; flex: none; white-space: nowrap; }
.num { display: flex; align-items: center; margin-left: auto; }
.num input { width: 28px; height: 14px; background: #454545; border: 1px solid #5e5e5e; text-align: center; color: #eee; }
.num svg { width: 11px; height: 14px; padding: 0 2px; border: 1px solid #5e5e5e; border-left: 0; }
.locks svg { width: 10px; height: 10px; margin-right: 7px; }
.locks .num svg { width: 11px; height: 14px; margin: 0; }
.locks .dim { color: #999; }
.locks { padding-left: 5px; }
.layer-body { flex: 1; display: flex; min-height: 0; overflow: hidden; }
.list { flex: 1; min-width: 0; }
.list li { display: flex; align-items: center; height: 24px; white-space: nowrap; overflow: hidden; }
.list .last { border-bottom: 1px solid #464646; }
.eye { width: 24px; align-self: stretch; display: grid; place-items: center; border-right: 1px solid #484848; flex: none; }
.eye svg, .sub > svg { width: 10px; height: 8px; }
.list-top .sub { height: 14px; }
.sub > svg { margin: 0 4px 0 13px; }
.deep > svg { margin-left: 26px; }
.list-top .cut { height: 12px; align-items: flex-end; }
.cut > *, .cut .eye { height: 22px; line-height: 18px; flex: none; align-self: flex-end; }
.list-top .tall { height: 29px; }
.list .sel { background: linear-gradient(90deg, #535353 24px, #696969 24px); }
.list-top .sel { height: 25px; }
.list em { margin-left: auto; margin-right: 4px; font: italic 11px/12px "Liberation Serif", serif; }
.list em:last-child { margin-right: 12px; }
.fold { width: 8px; height: 8px; }
.thumb { flex: none; width: 24px; height: 18px; margin: 0 7px 0 2px; border: 1px solid #333; background: repeating-conic-gradient(#ccc 0 25%, #fff 0 50%) 0 0 / 6px 6px; display: flex; justify-content: flex-end; align-items: flex-end; }
.thumb svg { width: 10px; height: 10px; background: #535353; }
.red { background: linear-gradient(#b90019 11px, #0000 11px), repeating-conic-gradient(#ccc 0 25%, #fff 0 50%) 0 0 / 6px 6px; }
.blue { background: linear-gradient(#001f45 11px, #0000 11px), repeating-conic-gradient(#ccc 0 25%, #fff 0 50%) 0 0 / 6px 6px; }
.picked { outline: 1px dashed #eee; outline-offset: 1px; }
.tlayer { width: 12px; height: 12px; margin: 0 13px 0 8px; }
.list-bottom li { height: 18px; }
.list-bottom .thumb { height: 13px; margin: 0 7px 0 14px; }
.list-bottom .clear { background: none; border-color: #0000; justify-content: center; align-items: center; }
.thumb.clear svg { width: 9px; height: 9px; background: none; }
.group .small { width: 8px; height: 8px; margin: 0 2px; }
.folder { width: 12px; height: 9px; margin-right: 7px; }
.list-bottom .tlayer { width: 9px; height: 9px; margin: 0 15px 0 22px; }
.meter { position: absolute; right: -2px; top: 68px; width: 10px; height: 44px; border: 1px solid #151b3a; border-radius: 3px; background: linear-gradient(#d8624b, #c5a43e 35%, #62ad60 65%, #3ab5ad) 2px 8px / 4px 30px no-repeat #26304e; }

/* Properties */
.props { height: 186px; flex: none; border-bottom: 2px solid #3a3a3a; }
.props h3 { margin: 0; height: 26px; display: flex; align-items: center; gap: 5px; padding-left: 8px; font-size: 9px; font-weight: 400; border-bottom: 1px solid #444; }
.props h3 svg { width: 17px; height: 17px; padding: 3px; background: #383838; border: 1px solid #626262; }
.props-body { display: flex; height: 118px; overflow: hidden; }
.fields { flex: 1; padding: 4px 4px 0 3px; }
.pair { display: flex; align-items: center; height: 21px; gap: 6px; }
.pair label { display: flex; align-items: center; justify-content: flex-end; gap: 4px; width: 66px; white-space: nowrap; }
.pair svg { width: 12px; height: 8px; margin: 0 1px 0 4px; color: #aaa; }
.pair input { width: 47px; height: 14px; background: #454545; border: 1px solid #636363; color: #eee; }
.pair.off input { color: #747474; background: none; border-color: #5e5e5e; }
.off label { color: #888; }
.fields hr { height: 1px; background: #444; margin: 2px 0 7px; }
.pick-font { width: 108px; margin-left: 3px; }
.pick-font select, .pick-size select { border-right: 0; padding-left: 1px; }
.sizes { display: flex; align-items: center; margin: 9px 0 0 4px; }
.pick-size { width: 59px; margin-left: 5px; }
.pick-style { width: 55px; margin-left: 23px; opacity: .4; }
.aligns { display: flex; gap: 2px; padding: 9px 0 0 2px; }
.aligns button { width: 18px; height: 19px; display: grid; place-items: center; color: #c4c4c4; }
.aligns .on { background: #3c3c3c; }

/* Menu and options */
.menubar { position: relative; height: 21px; flex: none; display: flex; align-items: center; padding: 0 3px 2px 0; }
.menubar strong { width: 35px; padding-left: 5px; font: 700 15px/18px "Open Sans", sans-serif; color: #6fa3dc; }
.menubar nav { display: flex; gap: 11px; color: #eee; }
.spark { position: absolute; left: 597px; top: 0; width: 51px; height: 2px; background: linear-gradient(90deg, #2c2a90 35%, #d522a0 45% 80%, #4ed526 84%); }
.winbtns { margin-left: auto; display: flex; align-self: flex-start; border: 1px solid #626262; border-top: 0; height: 14px; }
.winbtns button { width: 21px; display: grid; place-items: center; }
.winbtns button + button { border-left: 1px solid #626262; }
.winbtns button:last-child { width: 34px; }
.winbtns svg { width: 9px; height: 9px; }
.options { height: 25px; flex: none; display: flex; align-items: center; border-top: 1px solid #434343; border-bottom: 1px solid #484848; padding: 0 4px 0 15px; white-space: nowrap; }
.options .lead { width: 13px; height: 13px; margin-right: 5px; }
.options .small { width: 8px; height: 8px; }
.options hr { width: 1px; height: 18px; background: #414141; margin: 0 5px; flex: none; }
.tick { display: flex; align-items: center; gap: 5px; }
.tick input { appearance: none; width: 10px; height: 10px; border: 1px solid #777; border-radius: 2px; }
.pick-layer { width: 42px; margin-left: 4px; }
.pick-layer select { padding-left: 4px; }
.second { margin: 0 6px 0 13px; }
.set { display: flex; color: #a9a9a9; margin-right: 4px; }
.set:has(+ hr) { margin-right: 0; }
.set svg { width: 20px; height: 12px; }
.mode { color: #8f8f8f; margin-left: 2px; margin-right: 2px; }
.options-end { margin-left: auto; display: flex; align-items: center; gap: 2px; }

.marks { position: absolute; left: 0; top: 0; width: 100%; height: 100%; color: #888; opacity: .24; pointer-events: none; }
.marks text { font-family: "Noto Sans CJK SC", sans-serif; }
```
